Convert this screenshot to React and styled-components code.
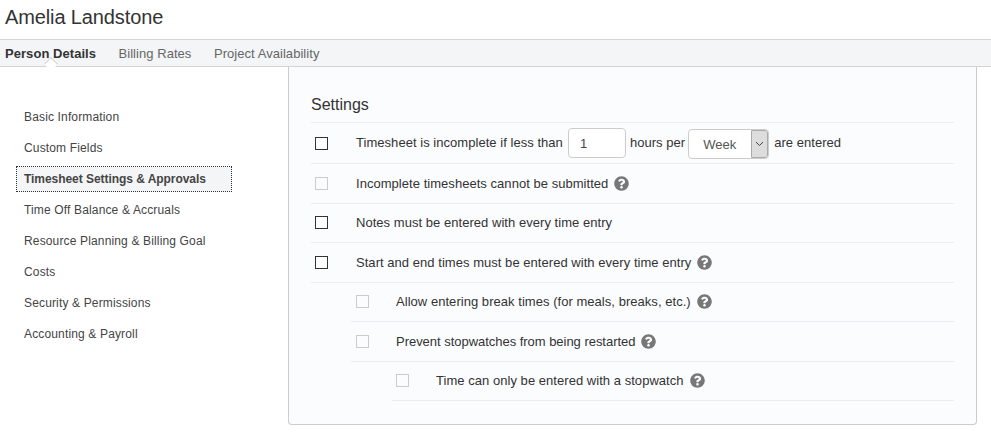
import React from 'react';
import styled, { createGlobalStyle } from 'styled-components';
import { FaQuestionCircle } from 'react-icons/fa';

const GlobalStyle = createGlobalStyle`
  html, body {
    margin: 0;
    padding: 0;
    background: #fff;
    font-family: "Liberation Sans", Arial, sans-serif;
    color: #333;
  }
  * {
    box-sizing: border-box;
  }
`;

const Page = styled.div`
  width: 991px;
  height: 444px;
  overflow: hidden;
`;

const Header = styled.header`
  height: 39px;
  padding-left: 5px;
  display: flex;
  align-items: center;
`;

const Name = styled.h1`
  margin: 0 0 5px;
  font-size: 20px;
  font-weight: 400;
  letter-spacing: -0.12px;
  color: #333;
`;

const TabBar = styled.nav`
  height: 28px;
  padding-left: 5px;
  display: flex;
  align-items: center;
  gap: 22.5px;
  background: #f4f5f7;
  border-top: 1px solid #d4d4d4;
  border-bottom: 1px solid #d4d4d4;
`;

const Tab = styled.span`
  position: relative;
  font-size: 13px;
  letter-spacing: 0.05px;
  font-weight: ${({ active }) => (active ? 700 : 400)};
  color: ${({ active }) => (active ? '#333' : '#666')};

  ${({ active }) =>
    active &&
    `
    &::after {
      content: '';
      position: absolute;
      left: 41px;
      bottom: -8px;
      width: 9px;
      height: 9px;
      background: #fff;
      border-top: 1px solid #d4d4d4;
      border-left: 1px solid #d4d4d4;
      transform: rotate(45deg);
    }
  `}
`;

const Body = styled.div`
  display: flex;
  align-items: flex-start;
`;

const Sidebar = styled.ul`
  width: 288px;
  margin: 0;
  padding: 37px 56px 0 16px;
  list-style: none;
  display: flex;
  flex-direction: column;
  gap: 5px;
`;

const SideItem = styled.li`
  height: 26px;
  padding-left: 7px;
  display: flex;
  align-items: center;
  font-size: 12px;
  color: #444;
  letter-spacing: ${({ active }) => (active ? '-0.05px' : '0.15px')};
  font-weight: ${({ active }) => (active ? 700 : 400)};
  background: ${({ active }) => (active ? '#f4f5f7' : 'transparent')};
  border: 1px ${({ active }) => (active ? 'dotted #333' : 'solid transparent')};
`;

const Panel = styled.section`
  width: 689px;
  height: 358px;
  padding: 28px 22px 0;
  background: #fbfcfe;
  border: 1px solid #ccc;
  border-top: 0;
  border-radius: 0 0 4px 4px;
`;

const PanelTitle = styled.h2`
  margin: 0;
  height: 27px;
  font-size: 16px;
  line-height: 20px;
  font-weight: 400;
  color: #333;
`;

const Row = styled.div`
  height: ${({ tall }) => (tall ? 42 : 39.5)}px;
  margin-left: ${({ level }) => level * 40 + (level === 2 ? 1 : 0)}px;
  padding-left: ${({ level }) => (level === 1 ? 5 : 4)}px;
  display: flex;
  align-items: center;
  border-top: ${({ first }) => (first ? '1px solid #eaecef' : '0')};
  border-bottom: 1px solid #eaecef;
  font-size: 13px;
  letter-spacing: 0.04px;
  color: #333;
`;

const Check = styled.span`
  flex: none;
  width: 13px;
  height: 13px;
  margin-right: ${({ level }) => (level === 0 ? 28 : 27)}px;
  background: ${({ disabled }) => (disabled ? '#fbfcfe' : '#fff')};
  border: 1px solid ${({ disabled }) => (disabled ? '#ccc' : '#333')};
`;

const Label = styled.span`
  display: flex;
  align-items: center;
  letter-spacing: ${({ tight }) => (tight ? '-0.03px' : 'inherit')};
`;

const FieldLabel = styled(Label)`
  padding-bottom: 2px;
`;

const NumberBox = styled.span`
  width: 58px;
  height: 30px;
  margin: 2px 4px 0 5px;
  padding-left: 11px;
  display: flex;
  align-items: center;
  background: #fff;
  border: 1px solid #ccc;
  border-radius: 4px;
  font-size: 13px;
  color: #444;
`;

const SelectBox = styled.span`
  width: 81px;
  height: 30px;
  margin: 4px 5px 0 3px;
  display: flex;
  align-items: stretch;
  background: #fff;
  border: 1px solid #ccc;
  border-radius: 4px;
  font-size: 13px;
  color: #555;
  overflow: hidden;
`;

const SelectValue = styled.span`
  flex: 1;
  padding-left: 14px;
  display: flex;
  align-items: center;
`;

const SelectArrow = styled.span`
  width: 17px;
  display: flex;
  align-items: center;
  justify-content: center;
  background: #ddd;
  border: 1px solid #aaa;
  border-radius: 0 3px 3px 0;
`;

const HelpIcon = styled(FaQuestionCircle)`
  flex: none;
  margin-left: 6px;
  font-size: 15px;
  color: #777;
`;

const Chevron = () => (
  <svg width="9" height="6" viewBox="0 0 9 6" fill="none" stroke="#444" strokeWidth="1">
    <path d="M1 1l3.5 3.5L8 1" />
  </svg>
);

const sideItems = [
  'Basic Information',
  'Custom Fields',
  'Timesheet Settings & Approvals',
  'Time Off Balance & Accruals',
  'Resource Planning & Billing Goal',
  'Costs',
  'Security & Permissions',
  'Accounting & Payroll',
];

const rows = [
  { text: 'Incomplete timesheets cannot be submitted', help: true, disabled: true, level: 0 },
  { text: 'Notes must be entered with every time entry', level: 0 },
  { text: 'Start and end times must be entered with every time entry', help: true, level: 0 },
  { text: 'Allow entering break times (for meals, breaks, etc.)', help: true, disabled: true, level: 1 },
  { text: 'Prevent stopwatches from being restarted', help: true, disabled: true, tight: true, level: 1 },
  { text: 'Time can only be entered with a stopwatch', help: true, disabled: true, level: 2 },
];

const App = () => (
  <Page>
    <GlobalStyle />
    <Header>
      <Name>Amelia Landstone</Name>
    </Header>
    <TabBar>
      <Tab active>Person Details</Tab>
      <Tab>Billing Rates</Tab>
      <Tab>Project Availability</Tab>
    </TabBar>
    <Body>
      <Sidebar>
        {sideItems.map((item, index) => (
          <SideItem key={item} active={index === 2}>
            {item}
          </SideItem>
        ))}
      </Sidebar>
      <Panel>
        <PanelTitle>Settings</PanelTitle>
        <Row first tall level={0}>
          <Check level={0} />
          <FieldLabel>
            Timesheet is incomplete if less than
            <NumberBox>1</NumberBox>
            hours per
            <SelectBox>
              <SelectValue>Week</SelectValue>
              <SelectArrow>
                <Chevron />
              </SelectArrow>
            </SelectBox>
            are entered
          </FieldLabel>
        </Row>
        {rows.map((row) => (
          <Row key={row.text} level={row.level}>
            <Check disabled={row.disabled} level={row.level} />
            <Label tight={row.tight}>
              {row.text}
              {row.help && <HelpIcon />}
            </Label>
          </Row>
        ))}
      </Panel>
    </Body>
  </Page>
);

export default App;
